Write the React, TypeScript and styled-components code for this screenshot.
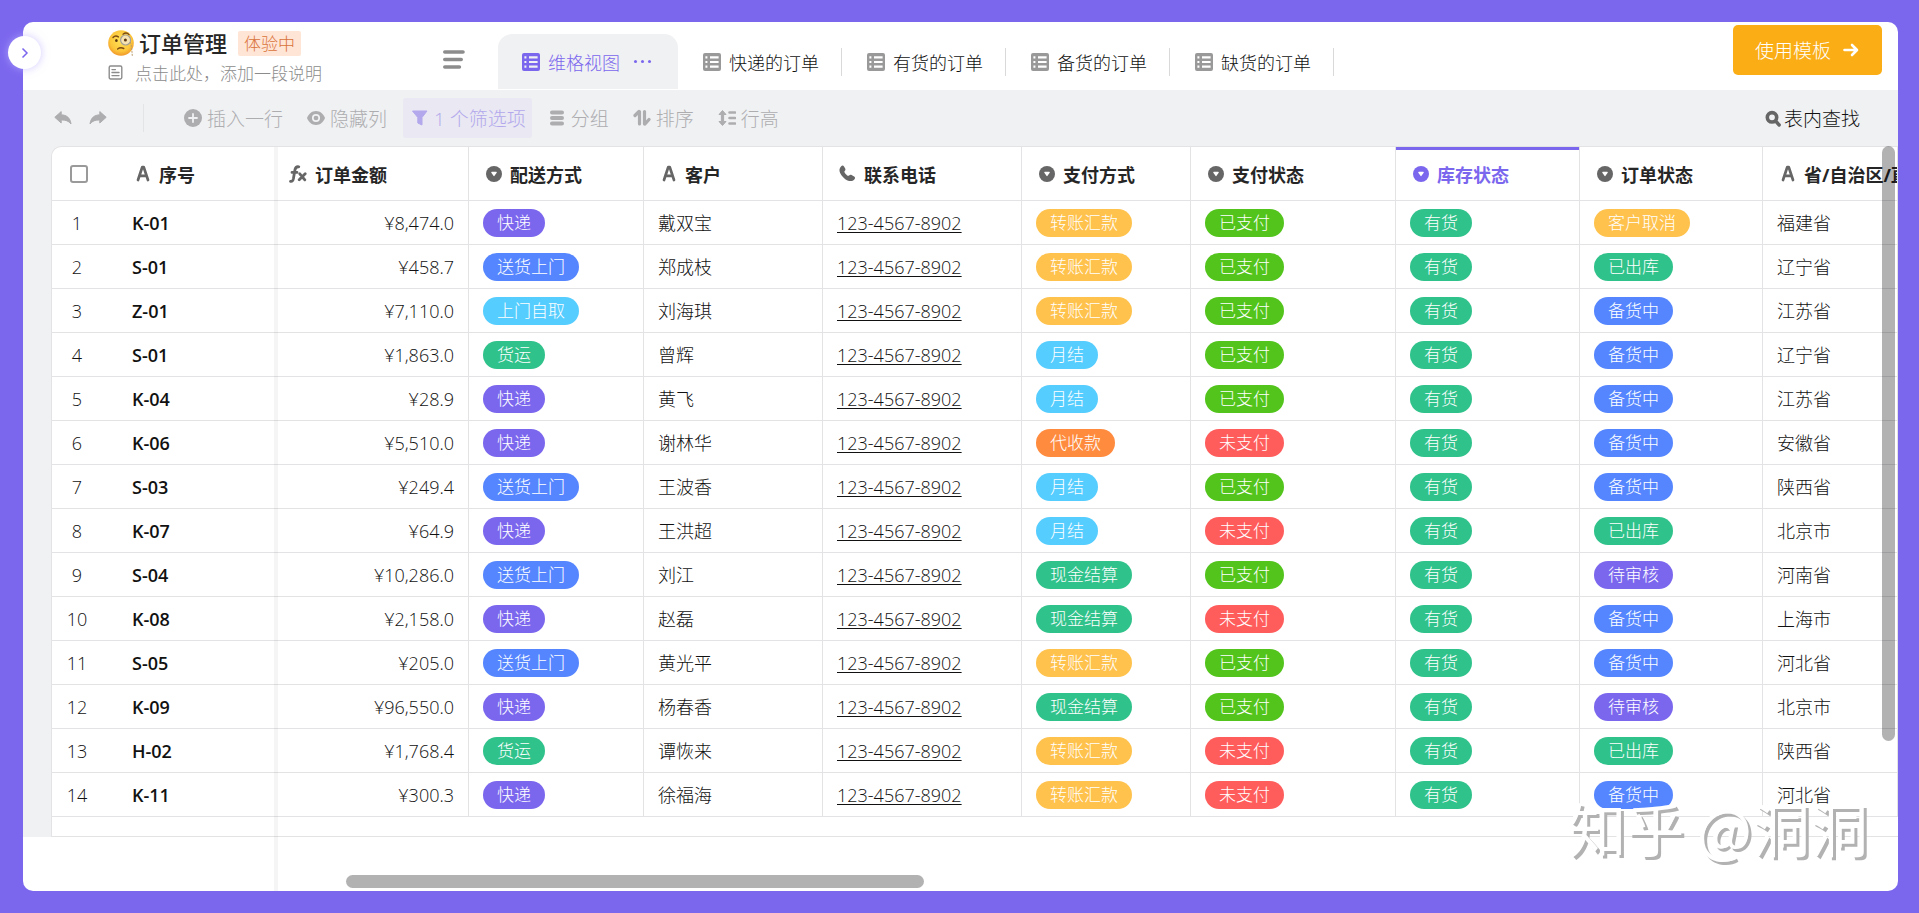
import React from "react";
import styled, { createGlobalStyle, css } from "styled-components";

const color = {
  brand: "#7b67ee",
  ink: "#262626",
  muted: "#8c8c8c",
  faint: "#adadb0",
  line: "#e3e3e5",
  bar: "#f0f1f3",
  purple: "#7b67ee",
  blue: "#5586ff",
  sky: "#55cdff",
  teal: "#30c28b",
  amber: "#ffc24c",
  orange: "#ff8b3f",
  green: "#52c41b",
  red: "#ff5c5c",
};

const GlobalStyle = createGlobalStyle`
  * { box-sizing: border-box; }
  body {
    margin: 0;
    background: ${color.brand};
    color: ${color.ink};
    font-family: "Open Sans", "Noto Sans CJK SC", sans-serif;
    font-size: 18px;
  }
  button { font: inherit; color: inherit; background: none; border: 0; padding: 0; cursor: pointer; }
  svg { display: block; flex: none; }
`;

const Page = styled.main`
  display: flex;
  min-height: 100vh;
  padding: 22px 21px 22px 23px;
`;

const Panel = styled.div`
  position: relative;
  flex: 1;
  min-width: 0;
  display: flex;
  flex-direction: column;
`;

const Surface = styled.div`
  flex: 1;
  display: flex;
  flex-direction: column;
  position: relative;
  overflow: hidden;
  background: #fff;
  border-radius: 10px;
`;

const ExpandButton = styled.button`
  position: absolute;
  z-index: 2;
  left: -15px;
  top: 14px;
  width: 33px;
  height: 33px;
  border-radius: 50%;
  display: grid;
  place-items: center;
  background: #fff;
  color: ${color.brand};
  box-shadow: 0 0 8px rgba(190, 180, 255, 0.7);
`;

const Header = styled.header`
  display: flex;
  height: 68px;
  padding: 0 16px 0 85px;
`;

const TitleBlock = styled.div`
  flex: 0 0 335px;
  padding-top: 7px;
`;

const TitleRow = styled.div`
  display: flex;
  align-items: center;
  height: 29px;
`;

const Title = styled.h1`
  margin: 0 11px 0 5px;
  font-size: 22px;
  line-height: 29px;
  font-weight: 500;
`;

const TrialTag = styled.span`
  padding: 0 6px;
  border-radius: 2px;
  font-size: 17px;
  line-height: 25px;
  font-weight: 300;
  color: #d9733a;
  background: #ffe5d6;
`;

const Description = styled.p`
  display: flex;
  align-items: center;
  gap: 12px;
  height: 28px;
  margin: 0;
  font-size: 17px;
  font-weight: 300;
  color: ${color.muted};
`;

const ListButton = styled.button`
  align-self: center;
  width: 22px;
  margin: 6px 33px 0 0;
  color: ${color.muted};
`;

const Tabs = styled.nav`
  display: flex;
  align-items: flex-end;
  padding-bottom: 1px;
`;

const Tab = styled.button<{ $active?: boolean }>`
  display: flex;
  align-items: center;
  gap: 8px;
  white-space: nowrap;
  font-weight: 300;
  ${(p) =>
    p.$active
      ? css`
          height: 55px;
          padding: 0 27px 0 24px;
          border-radius: 14px 14px 0 0;
          background: ${color.bar};
          color: ${color.brand};
        `
      : css`
          height: 28px;
          margin-bottom: 13px;
          padding: 0 22px 0 25px;
          border-right: 1px solid #d9d9d9;
          color: #111;
          & > svg {
            color: #999;
          }
        `}
`;

const MoreDots = styled.span`
  display: flex;
  gap: 4px;
  padding-left: 6px;
  & > i {
    width: 3px;
    height: 3px;
    border-radius: 50%;
    background: currentColor;
  }
`;

const UseTemplate = styled.button`
  display: flex;
  align-items: center;
  gap: 12px;
  height: 50px;
  margin: 3px 0 0 auto;
  padding: 0 23px 0 22px;
  border-radius: 5px;
  background: #faad14;
  color: #fff;
  font-size: 19px;
  font-weight: 300;
  white-space: nowrap;
`;

const Toolbar = styled.div`
  display: flex;
  align-items: center;
  height: 56px;
  padding: 0 38px 0 31px;
  background: ${color.bar};
  color: ${color.faint};
  font-size: 19px;
  font-weight: 300;
`;

const History = styled.div`
  display: flex;
  gap: 17px;
  padding-right: 36px;
  margin-right: 32px;
  height: 28px;
  border-right: 1px solid #e3e4e6;
`;

const Tools = styled.div`
  display: flex;
  gap: 8px;
`;

const Tool = styled.button<{ $active?: boolean }>`
  display: flex;
  align-items: center;
  gap: 5px;
  height: 40px;
  padding: 0 8px;
  border-radius: 3px;
  white-space: nowrap;
  ${(p) =>
    p.$active &&
    css`
      padding: 0 6px 0 8px;
      background: #e9e8f3;
      color: #b3a8ec;
    `}
`;

const Search = styled.button`
  display: flex;
  align-items: center;
  gap: 3px;
  margin-left: auto;
  color: #111;
  white-space: nowrap;
  & > svg {
    color: #666;
  }
`;

const GridArea = styled.div`
  padding-left: 28px;
  background: ${color.bar};
`;

const GridFrame = styled.div`
  overflow: hidden;
  background: #fff;
  border: 1px solid ${color.line};
  border-right: 0;
  border-radius: 10px 0 0 0;
`;

const FrozenEdge = styled.div`
  position: absolute;
  top: 125px;
  bottom: 0;
  left: 251px;
  width: 4px;
  background: rgba(0, 0, 0, 0.04);
`;

const Table = styled.table`
  width: 100%;
  table-layout: fixed;
  border-collapse: separate;
  border-spacing: 0;
`;

const HeadCell = styled.th<{ $active?: boolean; $bare?: boolean; $frozen?: boolean }>`
  height: 54px;
  padding: 0 0 0 ${(p) => (p.$bare ? 18 : 15)}px;
  text-align: left;
  overflow: hidden;
  border-bottom: 1px solid ${color.line};
  border-right: ${(p) => (p.$bare || p.$frozen ? "0" : `1px solid ${color.line}`)};
  font-weight: 700;
  ${(p) =>
    p.$active &&
    css`
      color: ${color.brand};
      box-shadow: inset 0 3px 0 ${color.brand};
    `}
`;

const HeadLabel = styled.div<{ $active?: boolean }>`
  display: flex;
  align-items: center;
  gap: 8px;
  white-space: nowrap;
  & > svg {
    color: ${(p) => (p.$active ? color.brand : "#666")};
  }
`;

const Check = styled.input`
  display: block;
  appearance: none;
  width: 18px;
  height: 18px;
  margin: 0;
  border: 2px solid #9a9a9a;
  border-radius: 3px;
  background: #fff;
`;

const Cell = styled.td<{ $kind?: "index" | "name" | "amount" }>`
  height: 44px;
  padding: 0 14px;
  line-height: 28px;
  overflow: hidden;
  white-space: nowrap;
  color: #111;
  font-weight: ${(p) => (p.$kind === "name" ? 600 : 300)};
  border-bottom: 1px solid ${color.line};
  border-right: ${(p) => (p.$kind === "index" || p.$kind === "name" ? "0" : `1px solid ${color.line}`)};
  ${(p) => p.$kind === "index" && "text-align: center; padding: 0 16px 0 0;"}
  ${(p) => p.$kind === "amount" && "text-align: right;"}
`;

const BlankCell = styled.td`
  height: 19px;
  padding: 0;
`;

const Phone = styled.a`
  color: inherit;
  text-decoration: underline;
  text-decoration-thickness: 1px;
  text-underline-offset: 2px;
`;

const Tag = styled.span<{ $tone: string }>`
  display: block;
  width: max-content;
  padding: 0 14px;
  border-radius: 14px;
  font-size: 17px;
  line-height: 28px;
  font-weight: 300;
  color: #fff;
  background: ${(p) => p.$tone};
`;

const ScrollThumb = styled.div<{ $axis: "x" | "y" }>`
  position: absolute;
  border-radius: 7px;
  background: rgba(0, 0, 0, 0.3);
  ${(p) =>
    p.$axis === "x"
      ? "left: 323px; bottom: 3px; width: 578px; height: 13px;"
      : "right: 3px; top: 124px; width: 13px; bottom: 150px;"}
`;

const Watermark = styled.div`
  position: absolute;
  right: 30px;
  bottom: 24px;
  font-family: "Noto Sans CJK SC", sans-serif;
  font-size: 58px;
  line-height: 80px;
  color: #fff;
  text-shadow: 3px 3px 0 #b2b2b2;
  pointer-events: none;
`;

const MonocleFace = () => (
  <svg width="26" height="27" viewBox="0 0 26 27">
    <defs>
      <radialGradient id="face" cx="50%" cy="40%" r="60%">
        <stop offset="0" stopColor="#ffe259" />
        <stop offset="0.7" stopColor="#fcc63a" />
        <stop offset="1" stopColor="#f0982a" />
      </radialGradient>
    </defs>
    <circle cx="13" cy="13" r="12.8" fill="url(#face)" />
    <path d="M5 7.5c1.5-1.6 3.6-1.8 5.4-.6M15 4.2c2-1.4 4.6-1.2 6 .4" fill="none" stroke="#7a4a12" strokeWidth="1.4" strokeLinecap="round" />
    <ellipse cx="8.4" cy="10.6" rx="1.3" ry="1.5" fill="#5b3510" />
    <circle cx="17.6" cy="10" r="5" fill="#f6e3b0" stroke="#a3a09a" strokeWidth="1.2" />
    <circle cx="17.4" cy="10" r="1.5" fill="#5b3510" />
    <path d="M9.6 19c2-1.5 4-1.6 6.2-.5" fill="none" stroke="#7a4a12" strokeWidth="1.4" strokeLinecap="round" />
    <path d="M22.3 12c1.4 4 1.6 9 2 14" fill="none" stroke="#b99a6a" strokeWidth="1" strokeDasharray="2 1" />
  </svg>
);

const DocIcon = () => (
  <svg width="15" height="15" viewBox="0 0 15 15" fill="none" stroke="currentColor" strokeWidth="1.4" strokeLinecap="round">
    <rect x="1.2" y="1" width="12.6" height="13" rx="1.4" />
    <path d="M4 4.6h3.4M4 7.5h7M4 10.6h7" />
  </svg>
);

const ListIcon = () => (
  <svg width="22" height="19" viewBox="0 0 22 19" fill="none" stroke="currentColor" strokeWidth="3.6" strokeLinecap="round">
    <path d="M1.8 2H20M1.8 9.5h16.4M1.8 17h14.6" />
  </svg>
);

const GridIcon = () => (
  <svg width="18" height="18" viewBox="0 0 18 18">
    <path
      fillRule="evenodd"
      fill="currentColor"
      d="M2 0h14a2 2 0 0 1 2 2v14a2 2 0 0 1-2 2H2a2 2 0 0 1-2-2V2a2 2 0 0 1 2-2ZM2.4 3.2v2.2h2V3.2ZM2.4 7.9v2.2h2V7.9ZM2.4 12.6v2.2h2v-2.2ZM7 3.2v2.2h8.6V3.2ZM7 7.9v2.2h8.6V7.9ZM7 12.6v2.2h8.6v-2.2Z"
    />
  </svg>
);

const ReplyIcon = ({ flip }: { flip?: boolean }) => (
  <svg width="18" height="28" viewBox="0 -7 18 28">
    <path
      transform={flip ? "translate(18 0) scale(-1 1)" : undefined}
      fill="currentColor"
      stroke="currentColor"
      strokeLinejoin="round"
      d="M.8 6.3 7.2.6v3.2c5.4.2 9 3 9.8 9.2C14.8 9.9 11.7 8.9 7.2 8.9v3.1Z"
    />
  </svg>
);

const PlusIcon = () => (
  <svg width="18" height="18" viewBox="0 0 18 18">
    <circle cx="9" cy="9" r="9" fill="currentColor" />
    <path d="M9 5v8M5 9h8" stroke={color.bar} strokeWidth="1.8" strokeLinecap="round" />
  </svg>
);

const EyeIcon = () => (
  <svg width="18" height="16" viewBox="0 0 18 16">
    <path fill="currentColor" d="M9 1c4.2 0 7.4 2.8 9 7-1.6 4.2-4.8 7-9 7s-7.4-2.8-9-7c1.6-4.2 4.8-7 9-7Z" />
    <circle cx="9" cy="8" r="3.2" fill="none" stroke={color.bar} strokeWidth="1.7" />
  </svg>
);

const FunnelIcon = () => (
  <svg width="18" height="16" viewBox="0 0 18 16">
    <path fill="currentColor" stroke="currentColor" strokeLinejoin="round" d="M1.5 1h14.5L11 7.5V15L6.800 13V7.5Z" />
  </svg>
);

const GroupIcon = () => (
  <svg width="18" height="18" viewBox="0 0 18 18" fill="none" stroke="currentColor" strokeWidth="4" strokeLinecap="round">
    <path d="M4 3.5h10M4 9h10M4 14.5h10" />
  </svg>
);

const SortIcon = () => (
  <svg width="18" height="18" viewBox="0 0 18 18" fill="none" stroke="currentColor" strokeLinecap="round" strokeLinejoin="round">
    <path strokeWidth="3.2" d="M6.5 2.5v12.5M6 2.5 2 6.5M11.5 2.5v12.5M12 15l4-4.500" />
  </svg>
);

const RowHeightIcon = () => (
  <svg width="18" height="18" viewBox="0 0 18 18">
    <path fill="currentColor" stroke="currentColor" strokeLinejoin="round" d="M4.5 1.5 8 5.5H5.6v7H8l-3.5 4L1 12.5h2.4v-7H1Z" />
    <path d="M11.5 3.5H17M11.5 9H17M11.5 14.5H17" stroke="currentColor" strokeWidth="2.6" strokeLinecap="round" />
  </svg>
);

const SearchIcon = () => (
  <svg width="16" height="17" viewBox="0 0 16 17" fill="none" stroke="currentColor" strokeLinecap="round">
    <circle cx="7" cy="7.3" r="4.7" strokeWidth="3.6" />
    <path d="m11.5 12 2.7 3" strokeWidth="3.4" />
  </svg>
);

const ArrowIcon = () => (
  <svg width="16" height="14" viewBox="0 0 16 14" fill="none" stroke="currentColor" strokeWidth="2.6" strokeLinecap="round" strokeLinejoin="round">
    <path d="M1.5 7h12M9 2l5 5-5 5" />
  </svg>
);

const ChevronIcon = () => (
  <svg width="8" height="12" viewBox="0 0 8 12" fill="none" stroke="currentColor" strokeWidth="1.5">
    <path d="m1.5 1.5 4.5 4.5-4.5 4.5" />
  </svg>
);

const TextIcon = () => (
  <svg width="18" height="17" viewBox="0 0 18 17" fill="none" stroke="currentColor" strokeWidth="2.7" strokeLinecap="round" strokeLinejoin="round">
    <path d="M5 15 9.3 2h1.4L15 15M6.5 10.8h7" />
  </svg>
);

const FormulaIcon = () => (
  <svg width="18" height="18" viewBox="0 0 18 18" fill="none" stroke="currentColor" strokeWidth="2.8" strokeLinecap="round">
    <path d="M1.5 16.4c2 .4 2.5-.8 3-3.2L6 4.600C6.500 2.400 7.700 1.400 9.800 1.800M3 7.400h5M10.800 8.800l5 6M16.200 8.800l-6 6" />
  </svg>
);

const SelectIcon = () => (
  <svg width="18" height="16" viewBox="0 0 18 16">
    <circle cx="10" cy="8" r="8" fill="currentColor" />
    <path d="M7.8 6.4h4.4L10 9.5Z" fill="#fff" stroke="#fff" strokeWidth="1.2" strokeLinejoin="round" />
  </svg>
);

const PhoneIcon = () => (
  <svg width="18" height="17" viewBox="0 0 18 17">
    <path
      fill="currentColor"
      d="M3.2 1.2C4 .4 5.4.4 6 1.4l1.2 2.2c.5.9.3 1.7-.5 2.5-.6.6-.4 1.3.5 2.3l1.5 1.5c1 .9 1.7 1.1 2.4.5.8-.7 1.6-.9 2.5-.4l2.5 1.5c1.2.7 1.2 2 .2 3-1.6 1.7-4 2.1-6.8.9C6.5 14.1 3.5 11.1 2.1 8 .9 5.3 1.4 2.9 3.2 1.2Z"
    />
  </svg>
);

const columns = [
  { label: "序号", icon: <TextIcon />, width: 156, frozen: true },
  { label: "订单金额", icon: <FormulaIcon />, width: 195 },
  { label: "配送方式", icon: <SelectIcon />, width: 175 },
  { label: "客户", icon: <TextIcon />, width: 179 },
  { label: "联系电话", icon: <PhoneIcon />, width: 199 },
  { label: "支付方式", icon: <SelectIcon />, width: 169 },
  { label: "支付状态", icon: <SelectIcon />, width: 205 },
  { label: "库存状态", icon: <SelectIcon />, width: 184, active: true },
  { label: "订单状态", icon: <SelectIcon />, width: 183 },
  { label: "省/自治区/直辖市", icon: <TextIcon /> },
];

const tones: Record<string, string> = {
  快递: color.purple,
  送货上门: color.blue,
  上门自取: color.sky,
  货运: color.teal,
  转账汇款: color.amber,
  月结: color.sky,
  代收款: color.orange,
  现金结算: color.teal,
  已支付: color.green,
  未支付: color.red,
  有货: color.teal,
  客户取消: color.amber,
  已出库: color.teal,
  备货中: color.blue,
  待审核: color.purple,
};

const phone = "123-4567-8902";

// code, amount, delivery, customer, payment method, payment state, order state, province
const orders = [
  ["K-01", "¥8,474.0", "快递", "戴双宝", "转账汇款", "已支付", "客户取消", "福建省"],
  ["S-01", "¥458.7", "送货上门", "郑成枝", "转账汇款", "已支付", "已出库", "辽宁省"],
  ["Z-01", "¥7,110.0", "上门自取", "刘海琪", "转账汇款", "已支付", "备货中", "江苏省"],
  ["S-01", "¥1,863.0", "货运", "曾辉", "月结", "已支付", "备货中", "辽宁省"],
  ["K-04", "¥28.9", "快递", "黄飞", "月结", "已支付", "备货中", "江苏省"],
  ["K-06", "¥5,510.0", "快递", "谢林华", "代收款", "未支付", "备货中", "安徽省"],
  ["S-03", "¥249.4", "送货上门", "王波香", "月结", "已支付", "备货中", "陕西省"],
  ["K-07", "¥64.9", "快递", "王洪超", "月结", "未支付", "已出库", "北京市"],
  ["S-04", "¥10,286.0", "送货上门", "刘江", "现金结算", "已支付", "待审核", "河南省"],
  ["K-08", "¥2,158.0", "快递", "赵磊", "现金结算", "未支付", "备货中", "上海市"],
  ["S-05", "¥205.0", "送货上门", "黄光平", "转账汇款", "已支付", "备货中", "河北省"],
  ["K-09", "¥96,550.0", "快递", "杨春香", "现金结算", "已支付", "待审核", "北京市"],
  ["H-02", "¥1,768.4", "货运", "谭恢来", "转账汇款", "未支付", "已出库", "陕西省"],
  ["K-11", "¥300.3", "快递", "徐福海", "转账汇款", "未支付", "备货中", "河北省"],
];

const TagCell = ({ value }: { value: string }) => (
  <Cell>
    <Tag $tone={tones[value]}>{value}</Tag>
  </Cell>
);

export default function App() {
  return (
    <Page>
      <GlobalStyle />
      <Panel>
        <ExpandButton aria-label="展开侧栏">
          <ChevronIcon />
        </ExpandButton>
        <Surface>
          <Header>
            <TitleBlock>
              <TitleRow>
                <MonocleFace />
                <Title>订单管理</Title>
                <TrialTag>体验中</TrialTag>
              </TitleRow>
              <Description>
                <DocIcon />
                点击此处，添加一段说明
              </Description>
            </TitleBlock>
            <ListButton aria-label="视图列表">
              <ListIcon />
            </ListButton>
            <Tabs>
              <Tab $active>
                <GridIcon />
                维格视图
                <MoreDots>
                  <i />
                  <i />
                  <i />
                </MoreDots>
              </Tab>
              {["快递的订单", "有货的订单", "备货的订单", "缺货的订单"].map((name) => (
                <Tab key={name}>
                  <GridIcon />
                  {name}
                </Tab>
              ))}
            </Tabs>
            <UseTemplate>
              使用模板
              <ArrowIcon />
            </UseTemplate>
          </Header>

          <Toolbar>
            <History>
              <button aria-label="撤销">
                <ReplyIcon />
              </button>
              <button aria-label="重做">
                <ReplyIcon flip />
              </button>
            </History>
            <Tools>
              <Tool><PlusIcon />插入一行</Tool>
              <Tool><EyeIcon />隐藏列</Tool>
              <Tool $active><FunnelIcon />1 个筛选项</Tool>
              <Tool><GroupIcon />分组</Tool>
              <Tool><SortIcon />排序</Tool>
              <Tool><RowHeightIcon />行高</Tool>
            </Tools>
            <Search>
              <SearchIcon />
              表内查找
            </Search>
          </Toolbar>

          <GridArea>
            <GridFrame>
              <Table>
                <colgroup>
                  <col width={66} />
                  {columns.map((c) => (
                    <col key={c.label} width={c.width} />
                  ))}
                </colgroup>
                <thead>
                  <tr>
                    <HeadCell $bare>
                      <Check type="checkbox" aria-label="全选" />
                    </HeadCell>
                    {columns.map((c) => (
                      <HeadCell key={c.label} $active={c.active} $frozen={c.frozen}>
                        <HeadLabel $active={c.active}>
                          {c.icon}
                          {c.label}
                        </HeadLabel>
                      </HeadCell>
                    ))}
                  </tr>
                </thead>
                <tbody>
                  {orders.map(([code, amount, delivery, customer, method, paid, state, province], i) => (
                    <tr key={i}>
                      <Cell $kind="index">{i + 1}</Cell>
                      <Cell $kind="name">{code}</Cell>
                      <Cell $kind="amount">{amount}</Cell>
                      <TagCell value={delivery} />
                      <Cell>{customer}</Cell>
                      <Cell>
                        <Phone href={`tel:${phone}`}>{phone}</Phone>
                      </Cell>
                      <TagCell value={method} />
                      <TagCell value={paid} />
                      <TagCell value="有货" />
                      <TagCell value={state} />
                      <Cell>{province}</Cell>
                    </tr>
                  ))}
                  <tr>
                    <BlankCell colSpan={11} />
                  </tr>
                </tbody>
              </Table>
            </GridFrame>
          </GridArea>

          <FrozenEdge />
          <Watermark>知乎 @洞洞</Watermark>
          <ScrollThumb $axis="y" />
          <ScrollThumb $axis="x" />
        </Surface>
      </Panel>
    </Page>
  );
}
